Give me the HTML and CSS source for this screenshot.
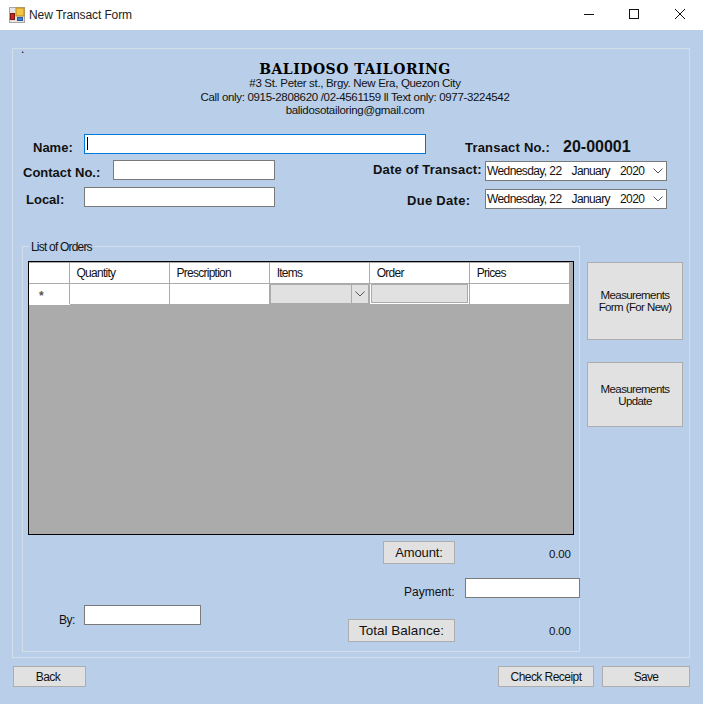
FILE: index.html
```html
<!DOCTYPE html>
<html lang="en">
<head>
    <meta charset="UTF-8">
    <meta name="viewport" content="width=device-width, initial-scale=1.0">
    <title>New Transact Form</title>
    <link rel="stylesheet" href="styles.css">
</head>
<body>
    <div class="window">
        <div class="titlebar">
            <svg class="app-icon" width="16" height="16" viewBox="0 0 16 16">
                <rect x="0.5" y="0.5" width="15" height="15" fill="#e4e4e4" stroke="#a8a8a8"/>
                <rect x="7" y="1" width="8" height="8" fill="#f5c542" stroke="#b98a1c"/>
                <rect x="1.5" y="6.5" width="4" height="6" fill="#c8281e" stroke="#7d1610"/>
                <rect x="8.5" y="10.5" width="5" height="3" fill="#3f7fd8" stroke="#2a5aa0"/>
            </svg>
            <span class="title">New Transact Form</span>
            <div class="window-buttons">
                <svg width="12" height="12" viewBox="0 0 12 12"><path d="M1 6.5H11" stroke="#111" fill="none"/></svg>
                <svg width="12" height="12" viewBox="0 0 12 12"><rect x="1.5" y="1.5" width="9" height="9" stroke="#111" fill="none"/></svg>
                <svg width="12" height="12" viewBox="0 0 12 12"><path d="M1 1L11 11M11 1L1 11" stroke="#111" fill="none"/></svg>
            </div>
        </div>

        <div class="form">
            <div class="outer-group">
                <span class="outer-legend">.</span>

                <div class="shop-info">
                    <div class="shop-name">BALIDOSO TAILORING</div>
                    <div>#3 St. Peter st., Brgy. New Era, Quezon City</div>
                    <div>Call only: 0915-2808620 /02-4561159 ll Text only: 0977-3224542</div>
                    <div>balidosotailoring@gmail.com</div>
                </div>

                <div class="field-row">
                    <label class="bold-label label-name">Name:</label>
                    <div class="name-box">
                        <input type="text" class="textbox textbox-focus">
                        <span class="caret"></span>
                    </div>
                    <label class="bold-label label-transact">Transact No.:</label>
                    <span class="transact-no">20-00001</span>
                </div>
                <div class="field-row row-contact">
                    <label class="bold-label label-contact">Contact No.:</label>
                    <input type="text" class="textbox textbox-contact">
                    <label class="bold-label label-date">Date of Transact:</label>
                    <div class="date-picker picker-transact">
                        <span class="date-text"><span>Wednesday, 22</span><span>January</span><span>2020</span></span>
                        <svg width="10" height="6" viewBox="0 0 10 6"><path d="M0.5 0.5L5 5L9.5 0.5" stroke="#555" fill="none"/></svg>
                    </div>
                </div>
                <div class="field-row row-local">
                    <label class="bold-label label-local">Local:</label>
                    <input type="text" class="textbox textbox-local">
                    <label class="bold-label label-due">Due Date:</label>
                    <div class="date-picker picker-due">
                        <span class="date-text"><span>Wednesday, 22</span><span>January</span><span>2020</span></span>
                        <svg width="10" height="6" viewBox="0 0 10 6"><path d="M0.5 0.5L5 5L9.5 0.5" stroke="#555" fill="none"/></svg>
                    </div>
                </div>

                <div class="orders-area">
                    <div class="orders-group">
                        <span class="orders-legend">List of Orders</span>
                        <div class="grid">
                            <table class="grid-table">
                                <thead>
                                    <tr>
                                        <th class="row-head"></th>
                                        <th>Quantity</th>
                                        <th>Prescription</th>
                                        <th>Items</th>
                                        <th>Order</th>
                                        <th>Prices</th>
                                    </tr>
                                </thead>
                                <tbody>
                                    <tr>
                                        <td class="row-head"><span class="new-row-mark">*</span></td>
                                        <td></td>
                                        <td></td>
                                        <td><div class="combo"><span class="combo-arrow"><svg width="10" height="6" viewBox="0 0 10 6"><path d="M0.5 0.5L5 5L9.5 0.5" stroke="#555" fill="none"/></svg></span></div></td>
                                        <td><div class="order-box"></div></td>
                                        <td></td>
                                    </tr>
                                </tbody>
                            </table>
                        </div>

                        <div class="total-row row-amount">
                            <button class="btn btn-amount">Amount:</button>
                            <span class="money">0.00</span>
                        </div>
                        <div class="total-row row-payment">
                            <label class="plain-label">Payment:</label>
                            <input type="text" class="textbox textbox-payment">
                        </div>
                        <div class="total-row row-balance">
                            <label class="plain-label label-by">By:</label>
                            <input type="text" class="textbox textbox-by">
                            <button class="btn btn-balance">Total Balance:</button>
                            <span class="money">0.00</span>
                        </div>
                    </div>

                    <div class="side-buttons">
                        <button class="btn btn-form">Measurements<br>Form (For New)</button>
                        <button class="btn btn-update">Measurements<br>Update</button>
                    </div>
                </div>
            </div>

            <div class="bottom-bar">
                <button class="btn btn-back">Back</button>
                <button class="btn btn-receipt">Check Receipt</button>
                <button class="btn btn-save">Save</button>
            </div>
        </div>
    </div>
</body>
</html>
```

FILE: styles.css
```css
* {
    box-sizing: border-box;
}

html, body {
    margin: 0;
    padding: 0;
}

body {
    font-family: 'Liberation Sans', Arial, sans-serif;
    font-size: 12px;
    color: #111;
    background-color: #b9cfe9;
}

.window {
    width: 703px;
    height: 704px;
    overflow: hidden;
}

.titlebar {
    height: 30px;
    background-color: #fff;
    display: flex;
    align-items: center;
    padding-left: 9px;
}

.app-icon {
    margin-right: 4px;
}

.title {
    font-size: 12px;
    letter-spacing: -0.1px;
    color: #222;
}

.window-buttons {
    margin-left: auto;
    margin-right: 17px;
    margin-bottom: 2px;
    display: flex;
    gap: 33px;
}

.window-buttons svg:last-child {
    margin-left: 1px;
}

.form {
    padding: 18px 13px 0 12px;
}

.outer-group {
    position: relative;
    width: 678px;
    height: 610px;
    border: 1px solid #d3dee8;
}

.outer-legend {
    position: absolute;
    left: 8px;
    top: -5px;
    line-height: 10px;
    color: #000;
}

.shop-info {
    width: 684px;
    height: 85px;
    padding-top: 13px;
    text-align: center;
    line-height: 13.5px;
    font-size: 11.5px;
    letter-spacing: -0.32px;
}

.shop-name {
    font-family: 'DejaVu Serif', serif;
    font-weight: bold;
    font-size: 14px;
    letter-spacing: 0.5px;
    line-height: 15px;
    color: #000;
}

.field-row {
    display: flex;
    align-items: flex-start;
    height: 20px;
}

.row-contact {
    margin-top: 6px;
}

.row-local {
    margin-top: 7px;
}

.bold-label {
    font-weight: bold;
    font-size: 13px;
    line-height: 20px;
    white-space: nowrap;
}

.textbox {
    height: 20px;
    border: 1px solid #7a7a7a;
    background-color: #fff;
    padding: 0;
    outline: none;
}

.textbox-focus {
    border-color: #0078d7;
    width: 100%;
}

.name-box {
    position: relative;
    width: 342px;
    height: 20px;
}

.caret {
    position: absolute;
    left: 3px;
    top: 3px;
    width: 1px;
    height: 13px;
    background-color: #000;
}

.label-name {
    margin-left: 20px;
    margin-top: 4px;
    width: 51px;
}

.label-transact {
    margin-left: 39px;
    margin-top: 4px;
    width: 98px;
    letter-spacing: 0.2px;
}

.transact-no {
    font-weight: bold;
    font-size: 16px;
    line-height: 20px;
    margin-top: 3px;
}

.label-contact {
    margin-left: 10px;
    margin-top: 3px;
    width: 90px;
}

.textbox-contact {
    width: 162px;
}

.label-date {
    margin-left: 98px;
    width: 112px;
    letter-spacing: 0.2px;
}

.label-local {
    margin-left: 13px;
    margin-top: 3px;
    width: 58px;
}

.textbox-local {
    width: 191px;
}

.label-due {
    margin-left: 132px;
    margin-top: 4px;
    width: 78px;
    letter-spacing: 0.3px;
}

.date-picker {
    flex-shrink: 0;
    width: 182px;
    height: 20px;
    border: 1px solid #7a7a7a;
    background-color: #fff;
    display: flex;
    align-items: center;
    justify-content: space-between;
    padding: 0 3px 0 1px;
    white-space: nowrap;
}

.picker-transact {
    margin-top: 1px;
}

.picker-due {
    margin-top: 2px;
}

.date-text {
    display: flex;
    gap: 10px;
    letter-spacing: -0.6px;
}

.date-picker svg {
    flex-shrink: 0;
}

.orders-area {
    display: flex;
    align-items: flex-start;
    margin-top: 39px;
    padding-left: 9px;
}

.orders-group {
    position: relative;
    width: 558px;
    height: 406px;
    border: 1px solid #d3dee8;
    padding: 14px 0 0 5px;
}

.orders-legend {
    position: absolute;
    left: 6px;
    top: -6px;
    padding: 0 2px;
    line-height: 12px;
    letter-spacing: -0.8px;
    background-color: #b9cfe9;
}

.grid {
    width: 546px;
    height: 274px;
    border: 1px solid #000;
    background-color: #ababab;
}

.grid-table {
    border-collapse: collapse;
    table-layout: fixed;
    width: 541px;
    margin: 1px 0 0 0;
    background-color: #fff;
}

.grid-table th {
    height: 20px;
    width: 100px;
    font-weight: normal;
    text-align: left;
    letter-spacing: -0.75px;
    padding: 0 0 0 7px;
    border-right: 1px solid #ababab;
    border-bottom: 1px solid #ababab;
}

.grid-table td {
    height: 21px;
    padding: 0;
    border-right: 1px solid #ababab;
    border-bottom: 1px solid #ababab;
}

.grid-table th.row-head,
.grid-table td.row-head {
    width: 40px;
}

.grid-table td.row-head {
    padding: 4px 0 0 10px;
    color: #555;
    border-bottom-color: #fff;
}

.new-row-mark {
    font-weight: bold;
}

.combo {
    height: 20px;
    background-color: #e1e1e1;
    border: 1px solid #ababab;
    display: flex;
    justify-content: flex-end;
}

.combo-arrow {
    width: 17px;
    border-left: 1px solid #ababab;
    display: flex;
    align-items: center;
    justify-content: center;
}

.order-box {
    height: 19px;
    margin: 0 1px;
    background-color: #e1e1e1;
    border: 1px solid #ababab;
}

.btn {
    font-family: 'Liberation Sans', Arial, sans-serif;
    font-size: 12px;
    color: #111;
    background-color: #e1e1e1;
    border: 1px solid #adadad;
    padding: 0;
}

.total-row {
    display: flex;
    align-items: flex-start;
}

.total-row > * {
    flex-shrink: 0;
}

.row-amount {
    margin-top: 6px;
    padding-left: 355px;
}

.btn-amount {
    width: 72px;
    height: 23px;
    font-size: 13px;
    letter-spacing: -0.1px;
}

.money {
    margin-left: 94px;
    margin-top: 7px;
    font-size: 11.5px;
    letter-spacing: -0.2px;
}

.row-payment {
    margin-top: 14px;
    padding-left: 376px;
}

.plain-label {
    margin-top: 7px;
    width: 61px;
}

.textbox-payment {
    width: 115px;
}

.row-balance {
    margin-top: 6px;
}

.label-by {
    margin-left: 31px;
    width: 25px;
    margin-top: 8px;
    letter-spacing: -0.5px;
}

.textbox-by {
    width: 117px;
}

.btn-balance {
    width: 107px;
    height: 23px;
    margin-left: 147px;
    margin-top: 14px;
    font-size: 13.5px;
}

.row-balance .money {
    margin-top: 20px;
}

.side-buttons {
    display: flex;
    flex-direction: column;
    gap: 22px;
    margin-left: 7px;
    margin-top: 16px;
}

.btn-form,
.btn-update {
    width: 96px;
    font-size: 11.5px;
    letter-spacing: -0.6px;
}

.btn-form {
    height: 78px;
}

.btn-update {
    height: 65px;
}

.bottom-bar {
    display: flex;
    margin-top: 8px;
    padding-left: 1px;
}

.btn-back,
.btn-receipt,
.btn-save {
    height: 21px;
}

.btn-back {
    width: 73px;
    padding-right: 3px;
    letter-spacing: -0.5px;
}

.btn-receipt {
    width: 96px;
    margin-left: auto;
    letter-spacing: -0.55px;
}

.btn-save {
    width: 88px;
    margin-left: 8px;
    letter-spacing: -0.7px;
}
```
